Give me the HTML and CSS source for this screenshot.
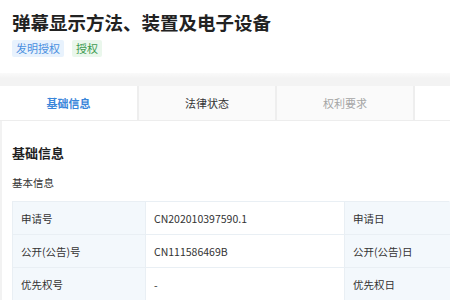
FILE: index.html
```html
<!DOCTYPE html>
<html lang="zh">
<head>
  <meta charset="UTF-8" />
  <title>弹幕显示方法、装置及电子设备</title>
  <link rel="stylesheet" href="styles.css">
</head>
<body>

  <div class="header">
    <h1 class="title">弹幕显示方法、装置及电子设备</h1>
    <div class="tags">
      <span class="tag tag-blue">发明授权</span>
      <span class="tag tag-green">授权</span>
    </div>
  </div>

  <div class="band"></div>

  <div class="tabs">
    <div class="tab active">基础信息</div>
    <div class="tab">法律状态</div>
    <div class="tab muted">权利要求</div>
    <div class="tab blank"></div>
  </div>

  <div class="content">
    <h2 class="section-title">基础信息</h2>
    <p class="sub-title">基本信息</p>

    <table class="info">
      <colgroup>
        <col class="col-label">
        <col class="col-value">
        <col>
      </colgroup>
      <tr>
        <td class="label">申请号</td>
        <td class="value">CN202010397590.1</td>
        <td class="label last">申请日</td>
      </tr>
      <tr>
        <td class="label">公开(公告)号</td>
        <td class="value">CN111586469B</td>
        <td class="label last">公开(公告)日</td>
      </tr>
      <tr>
        <td class="label">优先权号</td>
        <td class="value">-</td>
        <td class="label last">优先权日</td>
      </tr>
    </table>
  </div>

</body>
</html>
```

FILE: styles.css
```css
body {
  margin: 0;
  font-family: "Noto Sans CJK SC", "Open Sans", sans-serif;
  color: #333;
  background: #fff;
  width: 450px;
  overflow: hidden;
}
.header {
  padding: 8px 12px 0;
  height: 73px;
  box-sizing: border-box;
}
.title {
  margin: 0;
  font-size: 18.5px;
  line-height: 28px;
  font-weight: 700;
  color: #222;
}
.tags {
  display: flex;
  gap: 8px;
  margin-top: 4px;
}
.tag {
  font-size: 11px;
  line-height: 17px;
  padding: 0 4px;
  border-radius: 2px;
}
.tag-blue {
  background: #e8f2fd;
  color: #4a8fe0;
}
.tag-green {
  background: #eaf7ec;
  color: #3d9b50;
}
.band {
  height: 13px;
  background: linear-gradient(#fafafa, #f3f3f3 40%, #f3f3f3);
}
.tabs {
  display: flex;
  height: 34px;
  border-bottom: 1px solid #ededed;
}
.tab {
  width: 136px;
  flex: none;
  background: #fafafa;
  border-left: 1px solid #eeeeee;
  border-right: 1px solid #eeeeee;
  font-size: 11px;
  line-height: 34px;
  text-align: center;
  color: #333;
}
.tab.active {
  background: #fff;
  color: #3a86da;
  font-weight: 700;
  border-left: none;
  width: 137px;
}
.tab.muted {
  color: #a5a5a5;
}
.tab.blank {
  background: #fff;
  flex: 1;
  border-right: none;
}
.content {
  border-left: 2px solid #f2f2f2;
  padding: 0 0 0 10px;
}
.section-title {
  margin: 0;
  padding-top: 22px;
  font-size: 13px;
  line-height: 20px;
  font-weight: 700;
  color: #222;
}
.sub-title {
  margin: 0;
  padding-top: 12px;
  font-size: 10.5px;
  line-height: 16px;
  color: #333;
}
.info {
  margin-top: 10px;
  border-collapse: collapse;
  table-layout: fixed;
  width: 438px;
  font-size: 10.5px;
}
.col-label {
  width: 133px;
}
.col-value {
  width: 199px;
}
.info td {
  height: 32px;
  padding: 0 0 0 8px;
  border: 1px solid #e9eff4;
  color: #333;
  white-space: nowrap;
  overflow: hidden;
}
.info td.label {
  background: #f3f8fc;
}
.info td.last {
  border-right-color: #f3f8fc;
}
.info td.value {
  background: #fff;
}
```
